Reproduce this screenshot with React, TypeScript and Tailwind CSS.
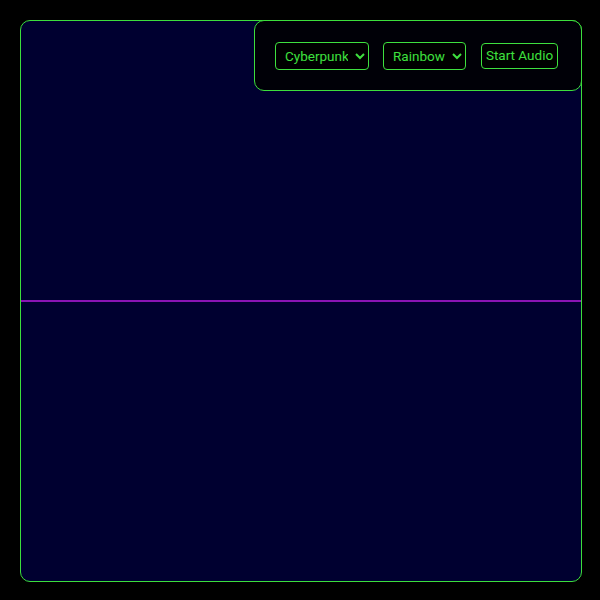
import React from "react";

export default function App() {
  return (
    <div className="w-[600px] h-[600px] bg-black p-5" style={{ fontFamily: "Roboto, 'Liberation Sans', sans-serif" }}>
      <div className="relative w-[562px] h-[562px]">
        <div className="w-full h-full border border-[#3cde3c] rounded-[10px] bg-[#000030] overflow-hidden flex items-center">
          <svg width="560" height="560" viewBox="0 0 560 560" className="block">
            <line x1="0" y1="280" x2="560" y2="280" stroke="#8a14b4" strokeWidth="2" />
          </svg>
        </div>
        <div className="absolute top-0 right-0 w-[328px] h-[71px] border border-[#3cde3c] rounded-[10px] bg-[rgba(0,0,0,0.85)] flex items-center pl-[20px] text-[#3ee03e] text-[13.5px]">
          <select className="h-[28px] w-[94px] border border-[#3ee03e] rounded-[4px] bg-black text-[#3ee03e] pl-[5px] pr-[4px]" defaultValue="Cyberpunk">
            <option>Cyberpunk</option>
          </select>
          <select className="h-[28px] w-[83px] ml-[14px] border border-[#3ee03e] rounded-[4px] bg-black text-[#3ee03e] pl-[5px] pr-[4px]" defaultValue="Rainbow">
            <option>Rainbow</option>
          </select>
          <button className="h-[26px] w-[77px] ml-[15px] border border-[#3ee03e] rounded-[4px] bg-black text-[#3ee03e] px-0 whitespace-nowrap text-center">
            Start Audio
          </button>
        </div>
      </div>
    </div>
  );
}
